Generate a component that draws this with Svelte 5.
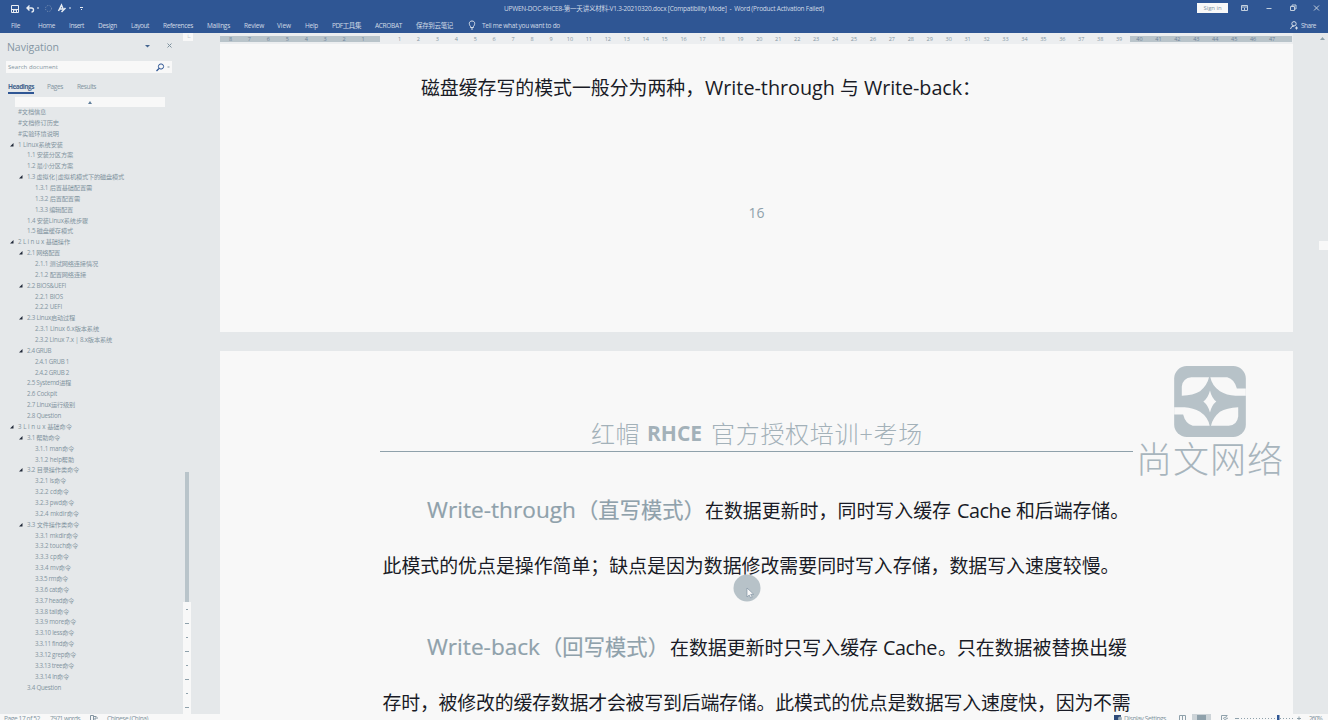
<script>
  // Spreads the glyphs of a run so that it takes exactly the given width.
  function fit(node, width) {
    node.style.letterSpacing = '0px';
    const range = document.createRange();
    range.selectNodeContents(node);
    const natural = range.getBoundingClientRect().width;
    const count = [...node.textContent].length;
    node.style.letterSpacing = (width - natural) / count + 'px';
    node.style.width = width + 'px';
  }

  // [label, gap before, width]
  const tabs = [
    ['File', 11, 9], ['Home', 18, 17], ['Insert', 14, 15], ['Design', 14, 19], ['Layout', 14, 18],
    ['References', 14, 30], ['Mailings', 14, 23], ['Review', 14, 20], ['View', 13, 14], ['Help', 14, 13],
    ['PDF工具集', 14, 29], ['ACROBAT', 14, 27], ['保存到云笔记', 14, 37]
  ];

  // [level, label, width, expandable]
  const headings = [
    [1, '#文档信息', 28], [1, '#文档修订历史', 41], [1, '#实验环境说明', 41],
    [1, '1 Linux系统安装', 45, true],
    [2, '1.1 安装分区方案', 46], [2, '1.2 最小分区方案', 46],
    [2, '1.3 虚拟化|虚拟机模式下的磁盘模式', 97, true],
    [3, '1.3.1 后置基础配置需', 57], [3, '1.3.2 后置配置需', 45], [3, '1.3.3 编辑配置', 38],
    [2, '1.4 安装Linux系统步骤', 61], [2, '1.5 磁盘缓存模式', 46],
    [1, '2 L i n u x 基础操作', 52, true],
    [2, '2.1 网络配置', 33, true],
    [3, '2.1.1 测试网络连接情况', 63], [3, '2.1.2 配置网络连接', 51],
    [2, '2.2 BIOS&UEFI', 39, true], [3, '2.2.1 BIOS', 28], [3, '2.2.2 UEFI', 27],
    [2, '2.3 Linux启动过程', 48, true],
    [3, '2.3.1 Linux 6.x版本系统', 64], [3, '2.3.2 Linux 7.x | 8.x版本系统', 77],
    [2, '2.4 GRUB', 24, true], [3, '2.4.1 GRUB 1', 34], [3, '2.4.2 GRUB 2', 34],
    [2, '2.5 Systemd进程', 44], [2, '2.6 Cockpit', 30], [2, '2.7 Linux运行级别', 48], [2, '2.8 Question', 34],
    [1, '3 L i n u x 基础命令', 54, true],
    [2, '3.1 帮助命令', 33, true], [3, '3.1.1 man命令', 39], [3, '3.1.2 help帮助', 39],
    [2, '3.2 目录操作类命令', 52, true],
    [3, '3.2.1 ls命令', 31], [3, '3.2.2 cd命令', 34], [3, '3.2.3 pwd命令', 39], [3, '3.2.4 mkdir命令', 44],
    [2, '3.3 文件操作类命令', 52, true],
    [3, '3.3.1 mkdir命令', 43], [3, '3.3.2 touch命令', 43], [3, '3.3.3 cp命令', 34], [3, '3.3.4 mv命令', 36],
    [3, '3.3.5 rm命令', 33], [3, '3.3.6 cat命令', 34], [3, '3.3.7 head命令', 39], [3, '3.3.8 tail命令', 34],
    [3, '3.3.9 more命令', 41], [3, '3.3.10 less命令', 39], [3, '3.3.11 find命令', 39], [3, '3.3.12 grep命令', 41],
    [3, '3.3.13 tree命令', 39], [3, '3.3.14 ln命令', 34],
    [2, '3.4 Question', 34]
  ];

  const left = [8, 7, 6, 5, 4, 3, 2, 1];
  const middle = Array.from({ length: 39 }, (_, i) => i + 1);
  const right = Array.from({ length: 8 }, (_, i) => i + 40);

  // Runs of a line: [text, gap before, width, accented]
  const intro = [['磁盘缓存写的模式一般分为两种，', 201, 283], ['Write-through', 1, 130], ['与', 5, 19], ['Write-back', 5, 98], ['：', 0, 19]];
  const lineA = [['Write-through', 207, 149, true], ['（直写模式）', 1, 128, true], ['在数据更新时，同时写入缓存', 0, 246], ['Cache', 6, 54], ['和后端存储。', 5, 113]];
  const lineB = [['此模式的优点是操作简单；缺点是因为数据修改需要同时写入存储，数据写入速度较慢。', 162.500, 737]];
  const lineC = [['Write-back', 207, 113, true], ['（回写模式）', 1, 128, true], ['在数据更新时只写入缓存', 1, 208], ['Cache', 5, 54], ['。只在数据被替换出缓', 1, 189]];
  const lineD = [['存时，被修改的缓存数据才会被写到后端存储。此模式的优点是数据写入速度快，因为不需', 162.500, 748]];
  const isLatin = (text) => /^[A-Za-z-]+$/.test(text);

  const hollow = 'M23 90V62Q26 36 52 34H105Q100 58 78 76Q58 88 23 90ZM109 34H160Q182 40 189 68H216V90H185Q158 88 138 76Q114 60 109 34Z';
</script>

{#snippet line(runs)}
  <p class="line">
    {#each runs as [text, gap, width, accent]}
      <span class:accent class:latin={isLatin(text)} style="margin-left:{gap}px" use:fit={width}>{text}</span>
    {/each}
  </p>
{/snippet}

<div class="window">
  <header>
    <div class="titlebar">
      <svg class="quick" width="90" height="16" viewBox="0 0 90 16" fill="none" stroke="#e8edf3">
        <path d="M11.500 5.500h7v7h-7zM12 9.500h6M13.500 12v-2h3v2" />
        <path d="M29.500 5.500l-2.500 2.500 2.500 2.500M27 8h4.500q2 0 2 2t-2 2" stroke-width="1.400" />
        <path d="M37 8h2M69 8h2M80 7.500h3M81 9.500h1" />
        <circle cx="48.500" cy="8.500" r="3" stroke="#8398b9" stroke-dasharray="1 1.500" />
        <path d="M58.500 11l3-6 2 5M60 9h3M61.500 12l4-4" stroke-width="1.500" />
      </svg>
      <span class="doc-title" use:fit={320}>UPWEN-DOC-RHCE8-第一天讲义材料-V1.3-20210320.docx [Compatibility Mode]  -  Word (Product Activation Failed)</span>
      <span class="signin"><b use:fit={18}>Sign in</b></span>
      <svg class="controls" width="88" height="16" viewBox="0 0 88 16" fill="none" stroke="#c3cfdd">
        <path d="M1.500 5.500h6v5h-6zM1.500 7h6M4.500 10V8M26.500 8.500h5M50.500 6.500h4v4h-4zM52 6V5h4v4h-1M74 5.500l5 5M79 5.500l-5 5" />
      </svg>
    </div>
    <nav class="tabs">
      {#each tabs as [label, gap, width]}
        <span style="margin-left:{gap}px" use:fit={width}>{label}</span>
      {/each}
      <svg class="bulb" width="8" height="10" viewBox="0 0 8 10" fill="none" stroke="#d6dee9"><path d="M2.500 6.500C.5 4 1 1 4 1s3.500 3 1.500 5.500v1h-3zM3 9h2" /></svg>
      <span class="tell" use:fit={78}>Tell me what you want to do</span>
      <svg class="person" width="8" height="9" viewBox="0 0 8 9" fill="none" stroke="#d6dee9"><circle cx="4" cy="2.800" r="2.200" /><path d="M.5 8q.5-3 3.500-3M5 7h3M6.500 5.500v3" /></svg>
      <span class="share" use:fit={15}>Share</span>
    </nav>
  </header>

  <main>
    <aside>
      <section class="panel">
        <div class="panel-head">
          <h1 use:fit={52}>Navigation</h1>
          <svg width="30" height="8" viewBox="0 0 30 8"><path d="M3 3h5L5.500 5.500z" fill="#44658f" /><path d="M25.500 1.500l4 4M29.500 1.500l-4 4" stroke="#7f929f" fill="none" /></svg>
        </div>
        <div class="search">
          <span use:fit={50}>Search document</span>
          <svg width="15" height="9" viewBox="0 0 15 9" fill="none" stroke="#2f5694"><circle cx="5" cy="3.500" r="2.600" /><path d="M3 5.500L.5 8" stroke-width="1.300" /><path d="M11.500 4h2" stroke="#8496a3" /></svg>
        </div>
        <div class="views">
          <b use:fit={26}>Headings</b><span class="pages" use:fit={16}>Pages</span><span class="results" use:fit={19}>Results</span>
        </div>
        <div class="jump"><svg width="4" height="3" viewBox="0 0 4 3"><path d="M0 3h4L2 0z" fill="#617f9b" /></svg></div>
        <ul>
          {#each headings as [level, label, width, open]}
            <li class="l{level}">
              <i>{#if open}<svg width="4" height="4" viewBox="0 0 4 4"><path d="M0 3.500h3.500V0z" fill="#202838" /></svg>{/if}</i>
              <span use:fit={width}>{label}</span>
            </li>
          {/each}
        </ul>
      </section>
      <div class="vruler">
        <div class="corner">└</div>
        <div class="vmargin"></div>
        <div class="vbody">
          {#each Array(8) as _, i}<i class:long={i % 2}></i>{/each}
        </div>
      </div>
    </aside>

    <div class="document">
      <div class="ruler">
        <div class="edge first">{#each left as n}<span>{n}</span>{/each}</div>
        <div class="scale">{#each middle as n}<span>{n}</span>{/each}</div>
        <div class="edge last">{#each right as n}<span>{n}</span>{/each}</div>
      </div>
      <article class="sheet one">
        {@render line(intro)}
        <div class="number">16</div>
      </article>
      <article class="sheet two">
        <div class="heading">
          <div class="running">
            <div class="course">
              <span use:fit={49}>红帽</span><b use:fit={55}>RHCE</b><span use:fit={212}>官方授权培训+考场</span>
            </div>
          </div>
          <div class="brand">
            <svg width="72" height="71" viewBox="0 0 216 214">
              <rect width="216" height="214" rx="38" fill="#b7c2c8" />
              <g fill="#f8f8f8">
                <path d={hollow} />
                <path transform="rotate(180 108 107)" d={hollow} />
                <path d="M108 74Q113 97 127 107Q113 118 108 140Q102 118 88 107Q102 97 108 74Z" />
              </g>
            </svg>
            <div class="company" use:fit={148}>尚文网络</div>
          </div>
        </div>
        <div class="text">
          {@render line(lineA)}
          {@render line(lineB)}
          <div class="space"></div>
          {@render line(lineC)}
          {@render line(lineD)}
        </div>
      </article>
      <svg class="pointer" width="28" height="28" viewBox="0 0 28 28">
        <circle cx="14" cy="14" r="13.500" fill="#b7c2c8" />
        <path d="M14 14v9l2.200-2 1.500 3 1.500-.7-1.500-3h3z" fill="#f8f8f8" stroke="#76899a" stroke-width=".6" />
      </svg>
    </div>
    <div class="gutter"><svg width="5" height="3" viewBox="0 0 5 3"><path d="M0 3h5L2.500 0z" fill="#8fa1ab" /></svg><i></i></div>
  </main>

  <footer>
    <span class="s1" use:fit={36}>Page 17 of 52</span>
    <span class="s2" use:fit={30}>7971 words</span>
    <svg class="s3" width="8" height="6" viewBox="0 0 8 6" fill="none" stroke="#8294a1"><path d="M.5 6V1.500h3V6M3.500 2.500h3M5 6V4h3" /></svg>
    <span class="s4" use:fit={41}>Chinese (China)</span>
    <svg class="s5" width="8" height="6" viewBox="0 0 8 6"><path d="M0 1h7v5H0z" fill="#2f4a78" /><circle cx="6" cy="4.500" r="2" fill="#9caeb9" /></svg>
    <span class="s6" use:fit={42}>Display Settings</span>
    <svg class="s7" width="126" height="6" viewBox="0 0 126 6" fill="none" stroke="#8fa1ab">
      <path d="M.5 6V1.500h6V6M3.500 1.500V6" />
      <path d="M13 0h19v6H13z" fill="#cdd4d8" stroke="none" /><path d="M18 1h9v5h-9z" fill="#8fa1ab" stroke="none" />
      <path d="M42.500 6V1.500h6M44 4.500l4-2M45 6l4-2M56 4.500h4M118 4.500h4M120 2.500v4" />
      <path d="M62 4.500h54" stroke-dasharray="1 2" />
      <path d="M98 1h2.500v5H98z" fill="#2f5694" stroke="none" />
    </svg>
    <span class="s8" use:fit={13}>260%</span>
  </footer>
</div>

<style>
  :global(body) { margin: 0; }
  .window { width: 1328px; height: 720px; overflow: hidden; display: flex; flex-direction: column; background: #f8f8f8; color: #8294a0; font-family: "Open Sans", "Noto Sans CJK SC", sans-serif; }
  span, b, h1 { white-space: pre; }
  header { height: 33px; flex: none; background: #2f5694; color: #d2dbe6; font-size: 7px; }
  .titlebar { height: 16px; display: flex; align-items: center; line-height: 17px; }
  .quick { flex: none; }
  .doc-title { margin-left: 414px; font-size: 6.5px; flex: none; }
  .signin { margin-left: 373px; width: 31px; height: 10px; background: #f8f8f8; color: #8195a6; display: flex; justify-content: center; align-items: center; flex: none; font-size: 6px; }
  .signin b { font-weight: 400; flex: none; line-height: 10px; }
  .controls { margin-left: 12px; flex: none; }
  .tabs { height: 17px; display: flex; align-items: center; line-height: 17px; font-size: 6.5px; padding-top: 1px; box-sizing: border-box; }
  .tabs > * { flex: none; }
  .bulb { margin-left: 15px; }
  .tell { margin-left: 6px; }
  .person { margin-left: 730px; }
  .share { margin-left: 3px; }

  main { height: 681px; display: flex; flex: none; }
  aside { width: 220px; flex: none; display: flex; background: #e5e8ea; }
  .panel { width: 183px; }
  .panel-head { height: 28px; display: flex; align-items: center; }
  h1 { margin: 0 0 0 7px; font-size: 10.5px; font-weight: 400; line-height: 28px; color: #8496a3; flex: none; }
  .panel-head svg { margin: -3px 0 0 83px; }
  .search { margin-left: 6px; width: 166px; height: 12px; background: #f8f8f8; display: flex; align-items: center; font-size: 6px; line-height: 12px; }
  .search span { margin-left: 2px; }
  .search svg { margin-left: 98px; }
  .views { height: 21px; margin: 1px 0 2px 8px; display: flex; font-size: 6.5px; line-height: 25px; }
  .views b { color: #45658f; border-bottom: 2px solid #2f5694; height: 18px; }
  .pages { margin-left: 13px; }
  .results { margin-left: 14px; }
  .jump { margin-left: 15px; width: 150px; height: 10px; background: #f8f8f8; display: flex; align-items: center; justify-content: center; }
  ul { margin: 0; padding: 0; list-style: none; font-size: 6.2px; }
  li { height: 10.87px; line-height: 10.87px; display: flex; align-items: center; }
  li i { width: 8px; height: 11px; display: flex; align-items: center; margin-top: -1px; }
  li span { flex: none; }
  .l1 { padding-left: 10px; }
  .l2 { padding-left: 19px; }
  .l3 { padding-left: 27px; }
  .vruler { width: 10px; }
  .corner { height: 8px; background: #f8f8f8; text-align: center; font-size: 5px; line-height: 9px; }
  .vmargin { height: 130px; width: 4px; margin: 431px 0 0 2px; background: #b9c4ca; }
  .vbody { width: 8px; height: 112px; background: #f8f8f8; display: flex; flex-direction: column; align-items: center; justify-content: space-around; }
  .vbody i { width: 2px; height: 1px; background: #8fa1ab; }
  .vbody i.long { width: 4px; }

  .document { width: 1073px; flex: none; position: relative; background: #e5e8ea; }
  .ruler { height: 11px; display: flex; align-items: center; background: #eceef0; font-size: 5.5px; line-height: 6px; }
  .ruler span { width: 18.95px; text-align: center; flex: none; }
  .ruler div { height: 6px; display: flex; flex: none; }
  .edge { background: #b9c4ca; color: #6d8298; }
  .first, .scale, .last { box-sizing: border-box; }
  .first { width: 160px; padding-left: 1px; }
  .scale { width: 750px; padding-left: 10px; }
  .last { width: 162px; }
  .sheet { background: #f8f8f8; overflow: hidden; }
  .one { height: 288px; }
  .two { height: 363px; margin-top: 19px; }
  .line { margin: 0; display: flex; align-items: baseline; height: 55px; line-height: 55px; font-size: 18.9px; color: #191b26; font-family: "Noto Sans CJK SC", sans-serif; }
  .line span { flex: none; }
  .line .latin { font-family: "Open Sans", sans-serif; font-size: 19.8px; }
  .line .accent { font-size: 21.2px; color: #8fa1ab; -webkit-text-stroke: .2px #8fa1ab; }
  .line .accent.latin { font-size: 22.6px; }
  .one .line { margin-top: 15px; }
  .number { margin-top: 89px; text-align: center; font-size: 14px; line-height: 20px; color: #8fa1ab; }
  .heading { display: flex; height: 130px; }
  .running { width: 753px; margin-left: 160px; height: 100px; border-bottom: 1px solid #8fa1ab; }
  .course { display: flex; margin: 65px 0 0 211px; font-size: 24px; line-height: 35px; color: #a3b1b9; font-weight: 300; }
  .course b { margin: 0 9px 0 7px; font-weight: 700; font-size: 21px; }
  .brand { width: 150px; margin: 15px 0 0 3px; }
  .brand svg { display: block; margin-left: 38px; }
  .company { font-size: 36px; line-height: 46px; color: #a8b5bd; white-space: nowrap; font-weight: 300; }
  .text .line:first-child, .space + .line { height: 56px; }
  .space { height: 26px; }
  .pointer { position: absolute; left: 513px; top: 541px; }
  .gutter { width: 35px; background: #e5e8ea; display: flex; flex-direction: column; align-items: flex-end; }
  .gutter svg { margin: 4px 3px 0 0; }
  .gutter i { width: 9px; height: 9px; margin-top: 201px; background: #f8f8f8; }

  footer { height: 6px; display: flex; font-size: 6.5px; line-height: 9px; overflow: hidden; background: #f8f8f8; }
  footer > * { flex: none; }
  .s1 { margin-left: 4px; }
  .s2 { margin-left: 10px; }
  .s3 { margin-left: 10px; }
  .s4 { margin-left: 9px; }
  .s5 { margin-left: 966px; }
  .s6 { margin-left: 2px; }
  .s7 { margin-left: 13px; }
  .s8 { margin-left: 4px; }
</style>
